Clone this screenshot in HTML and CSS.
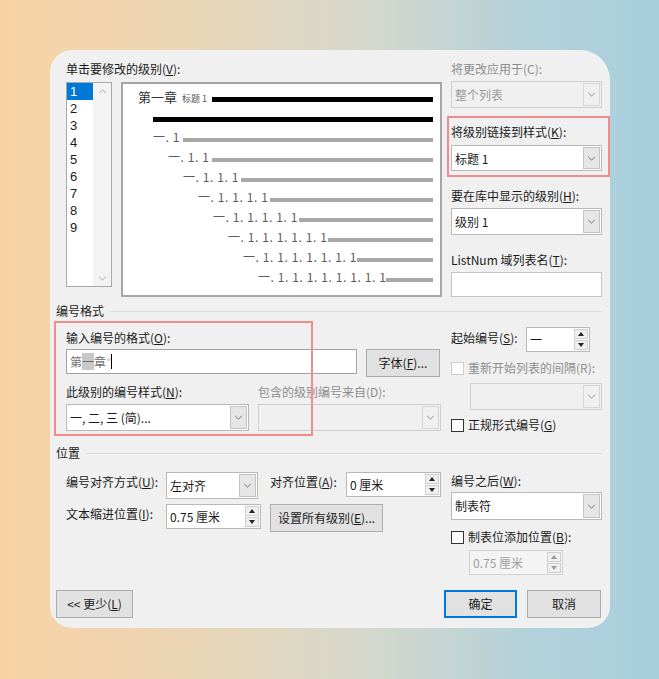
FILE: index.html
```html
<!DOCTYPE html>
<html lang="zh-CN">
<head>
    <meta charset="UTF-8" />
    <title>定义新多级列表</title>
    <link rel="stylesheet" href="styles.css">
</head>
<body>
    <div class="dialog">
        <div class="top">
            <div class="top-left">
                <div class="label">单击要修改的级别(<u>V</u>):</div>
                <div class="level-row">
                    <div class="levels">
                        <ul class="level-items">
                            <li class="sel">1</li><li>2</li><li>3</li><li>4</li><li>5</li><li>6</li><li>7</li><li>8</li><li>9</li>
                        </ul>
                        <div class="vscroll">
                            <svg class="chev" viewBox="0 0 10 6"><polyline points="1,5 5,1 9,5"/></svg>
                            <svg class="chev" viewBox="0 0 10 6"><polyline points="1,1 5,5 9,1"/></svg>
                        </div>
                    </div>
                    <div class="preview">
                        <div class="pv-row pv-first"><span class="pv-title">第一章</span><span class="pv-style">标题 1</span><span class="pv-line black"></span></div>
                        <div class="pv-row pv-second"><span class="pv-line black"></span></div>
                        <div class="pv-row" style="--lv:3"><span class="pv-num">一. 1</span><span class="pv-line"></span></div>
                        <div class="pv-row" style="--lv:4"><span class="pv-num">一. 1. 1</span><span class="pv-line"></span></div>
                        <div class="pv-row" style="--lv:5"><span class="pv-num">一. 1. 1. 1</span><span class="pv-line"></span></div>
                        <div class="pv-row" style="--lv:6"><span class="pv-num">一. 1. 1. 1. 1</span><span class="pv-line"></span></div>
                        <div class="pv-row" style="--lv:7"><span class="pv-num">一. 1. 1. 1. 1. 1</span><span class="pv-line"></span></div>
                        <div class="pv-row" style="--lv:8"><span class="pv-num">一. 1. 1. 1. 1. 1. 1</span><span class="pv-line"></span></div>
                        <div class="pv-row" style="--lv:9"><span class="pv-num">一. 1. 1. 1. 1. 1. 1. 1</span><span class="pv-line"></span></div>
                        <div class="pv-row" style="--lv:10"><span class="pv-num">一. 1. 1. 1. 1. 1. 1. 1. 1</span><span class="pv-line"></span></div>
                    </div>
                </div>
            </div>

            <div class="side">
                <div class="label dis">将更改应用于(C):</div>
                <div class="combo off">
                    <span class="val">整个列表</span>
                    <span class="drop"><svg viewBox="0 0 10 6"><polyline points="1,1 5,5 9,1"/></svg></span>
                </div>
                <div class="label first-gap">将级别链接到样式(<u>K</u>):</div>
                <div class="combo short">
                    <span class="val">标题 1</span>
                    <span class="drop"><svg viewBox="0 0 10 6"><polyline points="1,1 5,5 9,1"/></svg></span>
                </div>
                <div class="label gap">要在库中显示的级别(<u>H</u>):</div>
                <div class="combo">
                    <span class="val">级别 1</span>
                    <span class="drop"><svg viewBox="0 0 10 6"><polyline points="1,1 5,5 9,1"/></svg></span>
                </div>
                <div class="label gap">ListNum 域列表名(<u>T</u>):</div>
                <div class="textbox listnum"></div>
            </div>
        </div>

        <div class="group fmt-heading">编号格式</div>
        <div class="fmt">
            <div class="fmt-left">
                <div class="label fmt-first">输入编号的格式(<u>O</u>):</div>
                <div class="row">
                    <div class="textbox format-input">
                        <span>第<span class="shade">一</span>章</span>
                        <svg class="ret" viewBox="0 0 6 6"><polyline points="5,0 5,4 1,4"/><polyline points="2.5,2.5 1,4 2.5,5.5"/></svg>
                        <span class="caret"></span>
                    </div>
                    <div class="btn font-btn">字体(<u>F</u>)...</div>
                </div>
                <div class="row label-row">
                    <div class="label half">此级别的编号样式(<u>N</u>):</div>
                    <div class="label half dis">包含的级别编号来自(D):</div>
                </div>
                <div class="row style-row">
                    <div class="combo half">
                        <span class="val">一, 二, 三 (简)...</span>
                        <span class="drop"><svg viewBox="0 0 10 6"><polyline points="1,1 5,5 9,1"/></svg></span>
                    </div>
                    <div class="combo half off">
                        <span class="val"></span>
                        <span class="drop"><svg viewBox="0 0 10 6"><polyline points="1,1 5,5 9,1"/></svg></span>
                    </div>
                </div>
            </div>
            <div class="side">
                <div class="start-row">
                    <div class="label start-label">起始编号(<u>S</u>):</div>
                    <div class="spin start-spin">
                        <span class="val">一</span>
                        <span class="arrows">
                            <span><svg viewBox="0 0 6 4"><polygon points="0,4 3,0 6,4"/></svg></span>
                            <span><svg viewBox="0 0 6 4"><polygon points="0,0 6,0 3,4"/></svg></span>
                        </span>
                    </div>
                </div>
                <div class="checkrow restart">
                    <span class="check off"></span>
                    <span class="label dis">重新开始列表的间隔(R):</span>
                </div>
                <div class="combo off restart-combo">
                    <span class="val"></span>
                    <span class="drop"><svg viewBox="0 0 10 6"><polyline points="1,1 5,5 9,1"/></svg></span>
                </div>
                <div class="checkrow legal">
                    <span class="check"></span>
                    <span class="label">正规形式编号(<u>G</u>)</span>
                </div>
            </div>
        </div>

        <div class="group pos-heading">位置</div>
        <div class="pos">
            <div class="pos-left">
                <div class="row">
                    <div class="label pos-label">编号对齐方式(<u>U</u>):</div>
                    <div class="combo align-combo">
                        <span class="val">左对齐</span>
                        <span class="drop"><svg viewBox="0 0 10 6"><polyline points="1,1 5,5 9,1"/></svg></span>
                    </div>
                    <div class="label at-label">对齐位置(<u>A</u>):</div>
                    <div class="spin cm-spin">
                        <span class="val">0 厘米</span>
                        <span class="arrows">
                            <span><svg viewBox="0 0 6 4"><polygon points="0,4 3,0 6,4"/></svg></span>
                            <span><svg viewBox="0 0 6 4"><polygon points="0,0 6,0 3,4"/></svg></span>
                        </span>
                    </div>
                </div>
                <div class="row indent-row">
                    <div class="label pos-label">文本缩进位置(<u>I</u>):</div>
                    <div class="spin cm-spin">
                        <span class="val">0.75 厘米</span>
                        <span class="arrows">
                            <span><svg viewBox="0 0 6 4"><polygon points="0,4 3,0 6,4"/></svg></span>
                            <span><svg viewBox="0 0 6 4"><polygon points="0,0 6,0 3,4"/></svg></span>
                        </span>
                    </div>
                    <div class="btn all-btn">设置所有级别(<u>E</u>)...</div>
                </div>
            </div>
            <div class="side">
                <div class="label after-label">编号之后(<u>W</u>):</div>
                <div class="combo after-combo">
                    <span class="val">制表符</span>
                    <span class="drop"><svg viewBox="0 0 10 6"><polyline points="1,1 5,5 9,1"/></svg></span>
                </div>
                <div class="checkrow tabstop">
                    <span class="check"></span>
                    <span class="label">制表位添加位置(<u>B</u>):</span>
                </div>
                <div class="spin off tab-spin">
                    <span class="val">0.75 厘米</span>
                    <span class="arrows">
                        <span><svg viewBox="0 0 6 4"><polygon points="0,4 3,0 6,4"/></svg></span>
                        <span><svg viewBox="0 0 6 4"><polygon points="0,0 6,0 3,4"/></svg></span>
                    </span>
                </div>
            </div>
        </div>

        <div class="buttons">
            <div class="btn less-btn">&lt;&lt; 更少(<u>L</u>)</div>
            <div class="btn-group">
                <div class="btn ok-btn">确定</div>
                <div class="btn cancel-btn">取消</div>
            </div>
        </div>

        <!-- rote Markierungen -->
        <div class="mark mark-style"></div>
        <div class="mark mark-format"></div>
    </div>
</body>
</html>
```

FILE: styles.css
```css
* {
    box-sizing: border-box;
}
body {
    margin: 0;
    width: 659px;
    height: 679px;
    padding: 50px 0 0 50px;
    overflow: hidden;
    background: linear-gradient(90deg, #f8d3a4 0%, #ebd5b5 28%, #d4d8cc 56%, #b3d1da 80%, #a8cfdd 100%);
    font-family: "Noto Sans CJK SC", "Microsoft YaHei", sans-serif;
    font-size: 12px;
    color: #1a1a1a;
}
.dialog {
    position: relative;
    width: 560px;
    height: 578px;
    background: #f0f0f0;
    border-radius: 22px 30px 22px 22px;
    padding: 11px 8px 0 6px;
    overflow: hidden;
}
.label {
    line-height: 16px;
    white-space: nowrap;
}
.dis { color: #8e8e8e; }
u { text-underline-offset: 1px; }

/* obere Zeile */
.top {
    display: flex;
    gap: 9px;
    padding-left: 10px;
}
.top-left { width: 376px; }
.side { width: 151px; }
.level-row {
    display: flex;
    gap: 9px;
    margin-top: 5px;
    align-items: flex-start;
}
.levels {
    display: flex;
    width: 46px;
    height: 205px;
    background: #fff;
    border: 1px solid #a9a9a9;
}
.level-items {
    list-style: none;
    margin: 0;
    padding: 0;
    width: 26px;
}
.level-items li {
    height: 17px;
    line-height: 17px;
    padding-left: 3px;
    font-family: "Liberation Sans", Arial, sans-serif;
    font-size: 13px;
}
.level-items li.sel {
    background: #0078d7;
    color: #fff;
}
.vscroll {
    flex: 1;
    background: #f3f3f3;
    display: flex;
    flex-direction: column;
    justify-content: space-between;
    align-items: center;
    padding: 6px 0 5px;
}
.chev {
    width: 9px;
    height: 5px;
    fill: none;
    stroke: #a6a6a6;
    stroke-width: 1.2;
}
.preview {
    width: 321px;
    height: 215px;
    background: #fff;
    border: 2px solid #a6a6a6;
    padding: 5px 7px 0 0;
}
.pv-row {
    display: flex;
    align-items: baseline;
    height: 20px;
    line-height: 16px;
    padding-left: calc(15px * (var(--lv) - 1));
    white-space: nowrap;
}
.pv-first { --lv: 2; }
.pv-second {
    --lv: 3;
    align-items: flex-start;
}
.pv-second .pv-line { margin-top: 8px; }
.pv-title {
    font-size: 13px;
    color: #333;
    margin-right: 5px;
}
.pv-style {
    font-size: 9px;
    color: #555;
    margin-right: 5px;
}
.pv-num {
    width: calc(30px + 14px * (var(--lv) - 3));
    font-size: 12px;
    color: #5c5c5c;
    letter-spacing: 0.6px;
}
.pv-line {
    flex: 1;
    height: 4px;
    background: #a8a8a8;
}
.pv-line.black {
    height: 5px;
    background: #000;
}

/* Eingabefelder */
.combo {
    display: flex;
    height: 27px;
    margin-top: 4px;
    background: #fff;
    border: 1px solid #b9b9b9;
}
.combo .val {
    flex: 1;
    padding-left: 3px;
    line-height: 25px;
    white-space: nowrap;
    overflow: hidden;
}
.drop {
    width: 17px;
    margin: 1px;
    background: #e6e6e6;
    border: 1px solid #c4c4c4;
    display: flex;
    align-items: center;
    justify-content: center;
}
.drop svg {
    width: 9px;
    height: 5px;
    fill: none;
    stroke: #6a6a6a;
    stroke-width: 1.1;
}
.combo.off {
    background: #f0f0f0;
    border-color: #cfcfcf;
    color: #9a9a9a;
}
.combo.off .drop {
    background: #f0f0f0;
    border-color: #d6d6d6;
}
.combo.off .drop svg { stroke: #8a8a8a; }
.combo.short {
    height: 26px;
    margin-top: 5px;
}
.first-gap { margin-top: 16px; }
.gap { margin-top: 17px; }
.textbox {
    height: 25px;
    background: #fff;
    border: 1px solid #c3c3c3;
    padding-left: 3px;
    line-height: 23px;
}
.listnum { margin-top: 4px; }

.spin {
    display: flex;
    height: 25px;
    background: #fff;
    border: 1px solid #b9b9b9;
}
.spin .val {
    flex: 1;
    padding-left: 3px;
    line-height: 23px;
    white-space: nowrap;
}
.arrows {
    width: 14px;
    margin: 1px 1px 1px 0;
    display: flex;
    flex-direction: column;
    gap: 1px;
}
.arrows span {
    flex: 1;
    background: #efefef;
    border: 1px solid #cfcfcf;
    display: flex;
    align-items: center;
    justify-content: center;
}
.arrows svg {
    width: 6px;
    height: 4px;
    fill: #222;
}
.spin.off {
    color: #a0a0a0;
    border-color: #d2d2d2;
    background: #f4f4f4;
}
.spin.off .arrows svg { fill: #9a9a9a; }

.btn {
    height: 28px;
    background: #e1e1e1;
    border: 1px solid #adadad;
    text-align: center;
    line-height: 26px;
    white-space: nowrap;
}

.check {
    width: 13px;
    height: 13px;
    background: #fff;
    border: 1px solid #333;
    flex: none;
}
.check.off { border-color: #cdcdcd; }
.checkrow {
    display: flex;
    align-items: center;
    gap: 4px;
}

/* Gruppen */
.group {
    display: flex;
    align-items: center;
    gap: 6px;
    line-height: 16px;
}
.group::after {
    content: "";
    flex: 1;
    height: 1px;
    background: #dcdcdc;
}
.fmt-heading { margin-top: 6px; }
.pos-heading { margin-top: 12px; }

.fmt, .pos {
    display: flex;
    gap: 9px;
    padding-left: 10px;
}
.fmt-left, .pos-left { width: 376px; }
.row {
    display: flex;
    gap: 9px;
    align-items: flex-start;
}
.fmt-first { margin-top: 11px; }
.fmt-first + .row { margin-top: 3px; }
.format-input {
    width: 291px;
    border-color: #a3a3a3;
    color: #707070;
    display: flex;
    align-items: center;
}
.shade { background: #c8c8c8; }
.ret {
    width: 6px;
    height: 6px;
    margin: -5px 0 0 0;
    fill: none;
    stroke: #bdbdbd;
    stroke-width: 0.9;
}
.caret {
    width: 1px;
    height: 15px;
    background: #000;
    margin-left: -1px;
}
.font-btn { width: 74px; }
.label-row { margin-top: 7px; }
.half { width: 183px; }
.style-row { margin-top: 4px; }
.style-row .combo { margin-top: 0; }

.start-row {
    display: flex;
    align-items: center;
    margin-top: 8px;
}
.start-label { width: 75px; margin-top: -3px; }
.start-spin { width: 64px; }
.restart { margin-top: 8px; }
.restart-combo {
    margin: 7px 0 0 19px;
    width: 132px;
}
.legal { margin-top: 7px; }

.pos-left { padding-top: 11px; }
.pos .row { gap: 0; }
.pos-label {
    width: 100px;
    margin-top: 2px;
}
.align-combo {
    width: 92px;
    margin-top: 0;
}
.at-label {
    width: 76px;
    margin: 2px 0 0 12px;
}
.cm-spin { width: 95px; }
.indent-row { margin-top: 5px; }
.all-btn {
    width: 113px;
    margin-left: 9px;
}
.after-label { margin-top: 12px; }
.after-combo {
    height: 28px;
    margin-top: 3px;
}
.after-combo .val { line-height: 26px; }
.tabstop { margin-top: 9px; }
.tab-spin {
    width: 94px;
    margin: 5px 0 0 18px;
}

/* Schaltflächen unten */
.buttons {
    display: flex;
    justify-content: space-between;
    margin: 15px 1px 0 0;
}
.less-btn { width: 77px; }
.btn-group {
    display: flex;
    gap: 10px;
}
.ok-btn {
    width: 73px;
    border: 2px solid #0078d7;
    line-height: 24px;
}
.cancel-btn { width: 74px; }

.mark {
    position: absolute;
    border: 2px solid #f28c8c;
}
.mark-style {
    left: 397px;
    top: 66px;
    width: 163px;
    height: 61px;
}
.mark-format {
    left: 4px;
    top: 271px;
    width: 259px;
    height: 115px;
}
```
